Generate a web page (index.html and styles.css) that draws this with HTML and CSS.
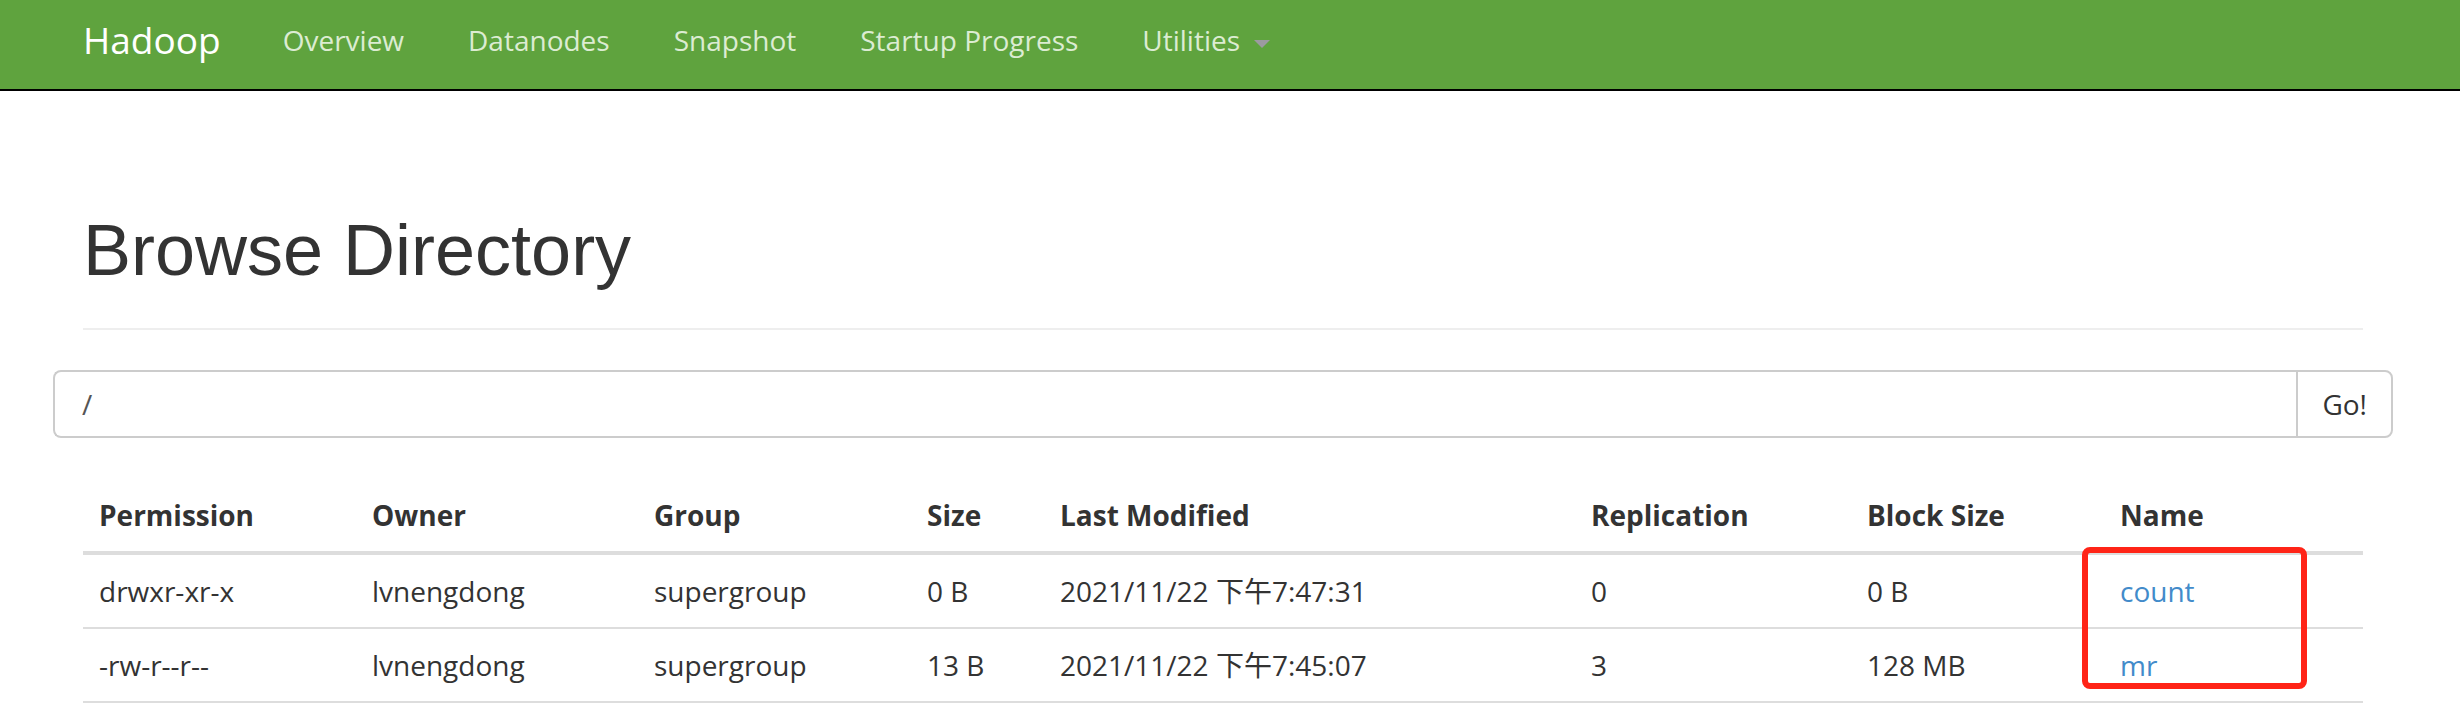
FILE: index.html
```html
<!DOCTYPE html>
<html lang="en">
<head>
<meta charset="utf-8">
<title>Browsing HDFS</title>
<link rel="stylesheet" href="styles.css">
</head>
<body>
<nav class="navbar">
  <div class="nav-inner">
    <a class="brand" href="#">Hadoop</a>
    <ul class="nav">
      <li><a href="#">Overview</a></li>
      <li><a href="#">Datanodes</a></li>
      <li><a href="#">Snapshot</a></li>
      <li><a href="#">Startup Progress</a></li>
      <li><a href="#">Utilities<span class="caret"></span></a></li>
    </ul>
  </div>
</nav>
<main class="container">
  <div class="page-header"><h1>Browse Directory</h1></div>
  <form class="input-group">
    <input class="path" type="text" value="/">
    <button class="go" type="button">Go!</button>
  </form>
  <div class="table-wrap">
    <table class="listing">
      <colgroup>
        <col class="c-perm"><col class="c-owner"><col class="c-group"><col class="c-size">
        <col class="c-mod"><col class="c-rep"><col class="c-block"><col class="c-name">
      </colgroup>
      <thead>
        <tr><th>Permission</th><th>Owner</th><th>Group</th><th>Size</th><th>Last Modified</th><th>Replication</th><th>Block Size</th><th>Name</th></tr>
      </thead>
      <tbody>
        <tr><td>drwxr-xr-x</td><td>lvnengdong</td><td>supergroup</td><td>0 B</td><td>2021/11/22 下午7:47:31</td><td>0</td><td>0 B</td><td><a href="#">count</a></td></tr>
        <tr><td>-rw-r--r--</td><td>lvnengdong</td><td>supergroup</td><td>13 B</td><td>2021/11/22 下午7:45:07</td><td>3</td><td>128 MB</td><td><a href="#">mr</a></td></tr>
      </tbody>
    </table>
    <div class="highlight"></div>
  </div>
</main>
</body>
</html>
```

FILE: styles.css
```css
* { box-sizing: border-box; }
html, body { margin: 0; padding: 0; background: #fff; }
body {
  font-family: "Open Sans", "Noto Sans CJK SC", sans-serif;
  font-size: 28px;
  line-height: 40px;
  color: #333;
  overflow: hidden;
}
a { text-decoration: none; }

.navbar {
  background: #5fa33e;
  border-bottom: 2px solid #000;
  height: 91px;
}
.nav-inner {
  display: flex;
  align-items: flex-start;
  padding-left: 53px;
}
.brand {
  color: #fff;
  font-size: 37px;
  line-height: 40px;
  padding: 20px 30px 0 30px;
}
.nav {
  display: flex;
  list-style: none;
  margin: 0;
  padding: 0;
}
.nav a {
  display: block;
  color: #dcecd2;
  padding: 20px 32px 0;
  line-height: 40px;
}
.caret {
  display: inline-block;
  width: 0;
  height: 0;
  margin-left: 14px;
  vertical-align: middle;
  border-top: 8px solid #9c9aa0;
  border-left: 8px solid transparent;
  border-right: 8px solid transparent;
}

.container {
  width: 2340px;
  margin-left: 53px;
  padding: 120px 30px 0;
}
.page-header {
  padding-bottom: 18px;
  border-bottom: 2px solid #eee;
  margin-bottom: 40px;
}
.page-header h1 {
  margin: 0 0 20px;
  font-family: "Liberation Sans", Arial, sans-serif;
  font-weight: 400;
  font-size: 72px;
  line-height: 79px;
  color: #333;
}

.input-group {
  display: flex;
  margin: 0 -30px;
  height: 68px;
}
.path {
  flex: 1;
  height: 68px;
  border: 2px solid #ccc;
  border-right: none;
  border-radius: 8px 0 0 8px;
  padding: 0 24px 0 27px;
  font-family: inherit;
  font-size: 28px;
  color: #555;
  background: #fff;
  outline: none;
}
.go {
  height: 68px;
  border: 2px solid #ccc;
  border-radius: 0 8px 8px 0;
  background: #fff;
  padding: 0 24px;
  font-family: inherit;
  font-size: 28px;
  color: #333;
}

.table-wrap {
  position: relative;
  margin-top: 41px;
}
.listing {
  width: 2280px;
  table-layout: fixed;
  border-collapse: collapse;
  border-spacing: 0;
}
.c-perm { width: 273px; }
.c-owner { width: 282px; }
.c-group { width: 273px; }
.c-size { width: 133px; }
.c-mod { width: 531px; }
.c-rep { width: 276px; }
.c-block { width: 253px; }
.c-name { width: 259px; }
.listing th, .listing td {
  text-align: left;
  padding: 16px;
  line-height: 40px;
  white-space: nowrap;
  vertical-align: bottom;
}
.listing th {
  font-weight: 700;
  border-bottom: 4px solid #ddd;
}
.listing td {
  border-bottom: 2px solid #ddd;
  vertical-align: top;
}
.listing td a { color: #428bca; }

.highlight {
  position: absolute;
  left: 1999px;
  top: 68px;
  width: 225px;
  height: 142px;
  border: 6px solid #ff2417;
  border-radius: 8px;
}
```
